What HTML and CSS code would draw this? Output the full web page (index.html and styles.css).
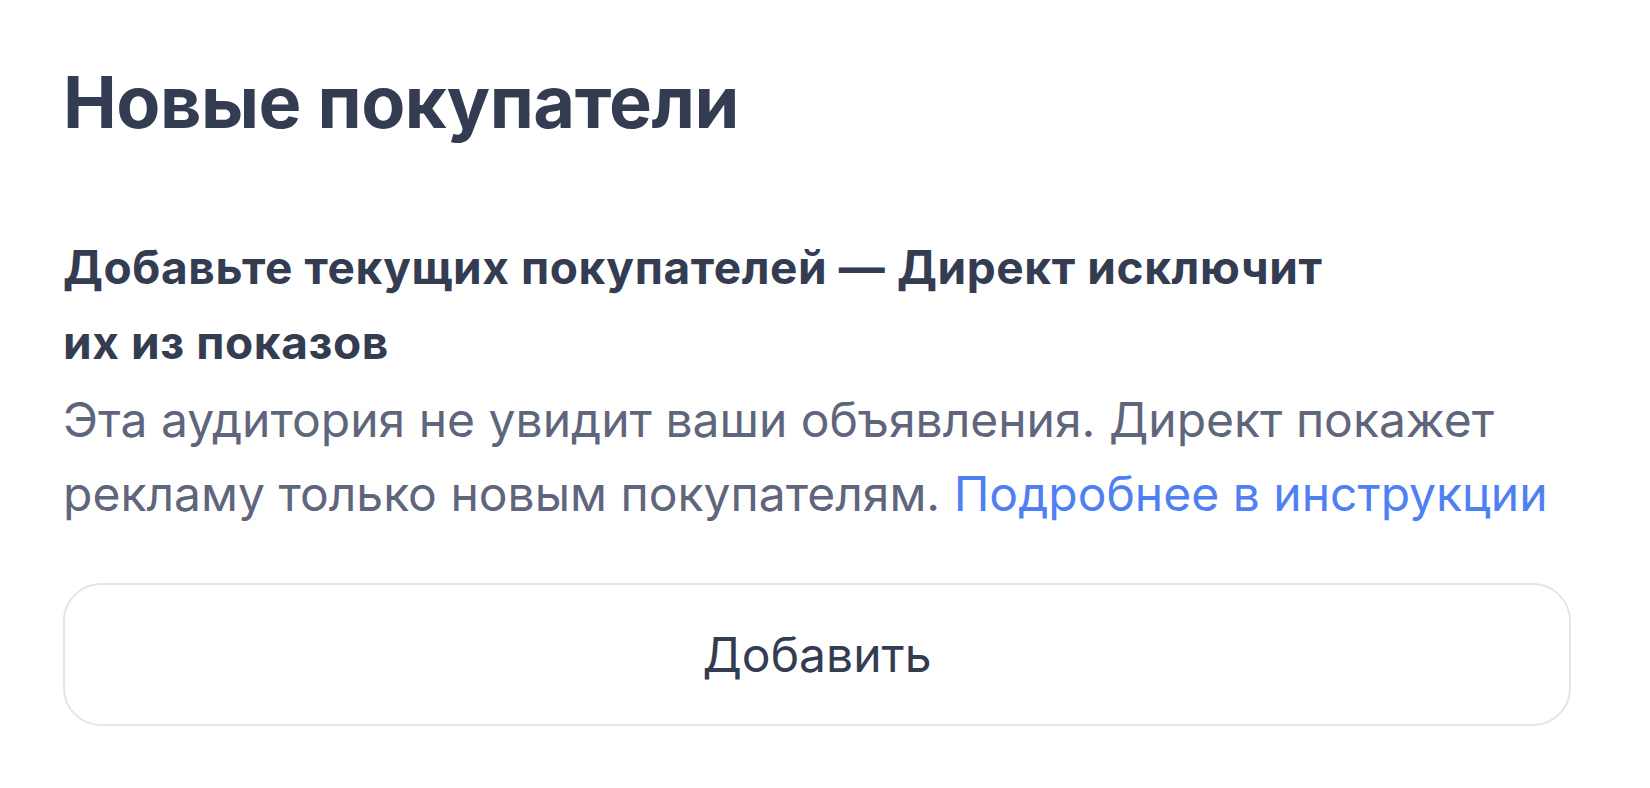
FILE: index.html
```html
<!DOCTYPE html>
<html lang="ru">
<head>
    <meta charset="UTF-8">
    <meta name="viewport" content="width=device-width, initial-scale=1.0">
    <title>Новые покупатели</title>
    <link rel="stylesheet" href="styles.css">
</head>
<body>
    <div class="card">
        <h1 class="card-title">Новые покупатели</h1>
        <div class="exclude">
            <h2 class="exclude-title">Добавьте текущих покупателей — Директ исключит<br>их из показов</h2>
            <p class="exclude-text">Эта аудитория не увидит ваши объявления. Директ покажет рекламу только новым покупателям. <a href="#" class="exclude-link">Подробнее в инструкции</a></p>
        </div>
        <button type="button" class="add-btn">Добавить</button>
    </div>
</body>
</html>
```

FILE: styles.css
```css
body {
    margin: 0;
    background-color: #fff;
    font-family: Inter, "Noto Sans", Arial, sans-serif;
    color: #343c51;
}
.card {
    padding: 54px 79px 40px 63px;
}
.card-title {
    margin: 0;
    font-size: 72px;
    line-height: 96px;
    font-weight: 700;
    letter-spacing: -0.5px;
}
.exclude {
    margin-top: 80px;
}
.exclude-title {
    margin: 0;
    font-size: 46px;
    line-height: 75px;
    font-weight: 700;
    letter-spacing: 0.6px;
}
.exclude-text {
    margin: 3px 0 0;
    font-size: 48px;
    line-height: 74px;
    color: #5f667c;
}
.exclude-link {
    color: #4f80f3;
    text-decoration: none;
}
.add-btn {
    display: block;
    width: 100%;
    height: 143px;
    margin-top: 52px;
    border: 2px solid #e3e5ed;
    border-radius: 38px;
    background: #fff;
    font-family: inherit;
    font-size: 48px;
    color: #343c51;
    cursor: pointer;
}
```
